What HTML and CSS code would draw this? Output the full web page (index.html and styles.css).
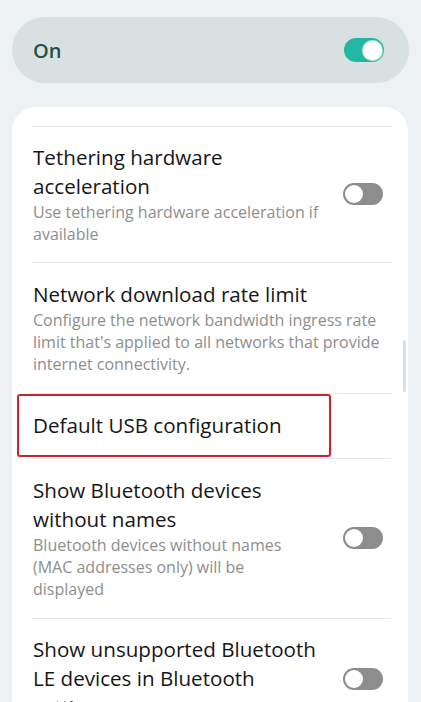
FILE: index.html
```html
<!DOCTYPE html>
<html>
<head>
<meta charset="utf-8">
<link rel="stylesheet" href="styles.css">
</head>
<body>
<div class="pill">
  <span class="pill-label">On</span>
  <span class="switch on"><span class="knob"></span></span>
</div>
<div class="card">
  <div class="scrollbar"></div>
  <div class="clip-row"></div>
  <div class="divider"></div>
  <div class="row first">
    <div class="texts">
      <div class="title">Tethering hardware<br>acceleration</div>
      <div class="sub">Use tethering hardware acceleration if<br>available</div>
    </div>
    <span class="switch"><span class="knob"></span></span>
  </div>
  <div class="divider"></div>
  <div class="row">
    <div class="texts wide">
      <div class="title">Network download rate limit</div>
      <div class="sub">Configure the network bandwidth ingress rate<br>limit that's applied to all networks that provide<br>internet connectivity.</div>
    </div>
  </div>
  <div class="divider"></div>
  <div class="row marked">
    <div class="texts wide">
      <div class="title">Default USB configuration</div>
    </div>
    <div class="highlight"></div>
  </div>
  <div class="divider"></div>
  <div class="row">
    <div class="texts">
      <div class="title">Show Bluetooth devices<br>without names</div>
      <div class="sub">Bluetooth devices without names<br>(MAC addresses only) will be<br>displayed</div>
    </div>
    <span class="switch"><span class="knob"></span></span>
  </div>
  <div class="divider"></div>
  <div class="row last">
    <div class="texts">
      <div class="title">Show unsupported Bluetooth<br>LE devices in Bluetooth<br>settings</div>
    </div>
    <span class="switch"><span class="knob"></span></span>
  </div>
</div>
</body>
</html>
```
FILE: styles.css
```css
html, body {
  margin: 0;
  padding: 0;
}
body {
  background: #eef1f3;
  font-family: "Open Sans", "Liberation Sans", sans-serif;
  width: 421px;
  height: 702px;
  overflow: hidden;
}
.pill {
  margin: 17px 12px 0 12px;
  height: 66px;
  border-radius: 33px;
  background: #d9e0e2;
  display: flex;
  align-items: center;
  justify-content: space-between;
  padding: 0 25px 0 21px;
}
.pill-label {
  font-size: 20px;
  font-weight: 600;
  color: #1d5348;
}
.switch {
  flex: none;
  width: 40px;
  height: 22px;
  border-radius: 11px;
  background: #8d8d8d;
  display: flex;
  align-items: center;
  padding: 0 2px;
  box-sizing: border-box;
}
.switch .knob {
  width: 18px;
  height: 18px;
  border-radius: 50%;
  background: #fff;
}
.switch.on {
  background: #25b7a4;
  justify-content: flex-end;
  height: 24px;
  border-radius: 12px;
}
.switch.on .knob {
  width: 19px;
  height: 19px;
  box-shadow: 0 0 0 1px #bfeee6;
}
.card {
  position: relative;
  margin: 24px 13px 0 12px;
  background: #fff;
  border-radius: 24px 24px 0 0;
  height: 620px;
  overflow: hidden;
}
.scrollbar {
  position: absolute;
  right: 2px;
  top: 233px;
  width: 3px;
  height: 52px;
  border-radius: 2px;
  background: #dcdfe1;
}
.clip-row {
  height: 19px;
}
.divider {
  height: 1px;
  background: #e6e8ea;
  margin: 0 17px 0 20px;
}
.row {
  position: relative;
  display: flex;
  align-items: center;
  justify-content: space-between;
  padding: 17px 25px 18px 21px;
}
.row.first {
  padding-top: 16px;
  padding-bottom: 17px;
}
.row.last {
  padding-top: 16px;
}
.texts {
  max-width: 310px;
}
.texts.wide {
  max-width: 370px;
}
.title {
  font-size: 20.6px;
  line-height: 29px;
  color: #161616;
  white-space: nowrap;
}
.sub {
  font-size: 16px;
  line-height: 22px;
  color: #8e8e8e;
  white-space: nowrap;
}
.highlight {
  position: absolute;
  left: 5px;
  top: 0;
  width: 314px;
  height: 63px;
  box-sizing: border-box;
  border: 2px solid #c8242c;
  border-radius: 3px;
}
```
